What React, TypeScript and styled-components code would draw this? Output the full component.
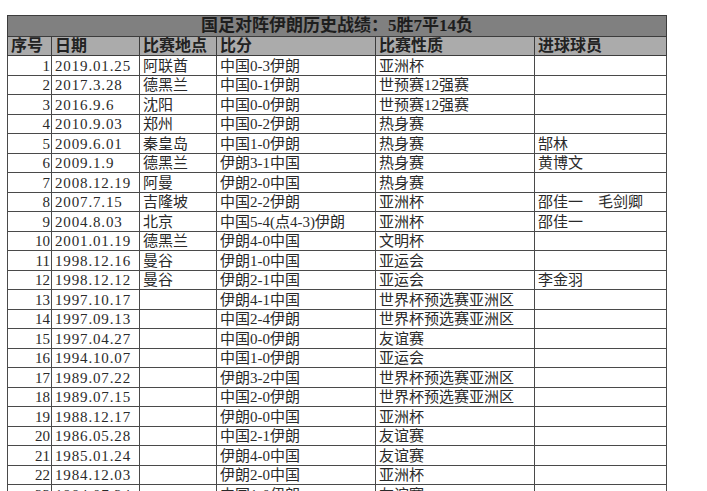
import React from "react";
import styled, { createGlobalStyle } from "styled-components";

const GlobalStyle = createGlobalStyle`
  html, body {
    margin: 0;
    padding: 0;
    background: #ffffff;
  }
  body {
    font-family: "Liberation Serif", "Noto Sans CJK SC", serif;
    color: #222222;
  }
`;

const COLUMNS = [44, 88, 77, 159, 159, 132];

const HEADERS = ["序号", "日期", "比赛地点", "比分", "比赛性质", "进球球员"];

const MATCHES = [
  ["2019.01.25", "阿联酋", "中国0-3伊朗", "亚洲杯", ""],
  ["2017.3.28", "德黑兰", "中国0-1伊朗", "世预赛12强赛", ""],
  ["2016.9.6", "沈阳", "中国0-0伊朗", "世预赛12强赛", ""],
  ["2010.9.03", "郑州", "中国0-2伊朗", "热身赛", ""],
  ["2009.6.01", "秦皇岛", "中国1-0伊朗", "热身赛", "郜林"],
  ["2009.1.9", "德黑兰", "伊朗3-1中国", "热身赛", "黄博文"],
  ["2008.12.19", "阿曼", "伊朗2-0中国", "热身赛", ""],
  ["2007.7.15", "吉隆坡", "中国2-2伊朗", "亚洲杯", "邵佳一　毛剑卿"],
  ["2004.8.03", "北京", "中国5-4(点4-3)伊朗", "亚洲杯", "邵佳一"],
  ["2001.01.19", "德黑兰", "伊朗4-0中国", "文明杯", ""],
  ["1998.12.16", "曼谷", "伊朗1-0中国", "亚运会", ""],
  ["1998.12.12", "曼谷", "伊朗2-1中国", "亚运会", "李金羽"],
  ["1997.10.17", "", "伊朗4-1中国", "世界杯预选赛亚洲区", ""],
  ["1997.09.13", "", "中国2-4伊朗", "世界杯预选赛亚洲区", ""],
  ["1997.04.27", "", "中国0-0伊朗", "友谊赛", ""],
  ["1994.10.07", "", "中国1-0伊朗", "亚运会", ""],
  ["1989.07.22", "", "伊朗3-2中国", "世界杯预选赛亚洲区", ""],
  ["1989.07.15", "", "中国2-0伊朗", "世界杯预选赛亚洲区", ""],
  ["1988.12.17", "", "伊朗0-0中国", "亚洲杯", ""],
  ["1986.05.28", "", "中国2-1伊朗", "友谊赛", ""],
  ["1985.01.24", "", "伊朗4-0中国", "友谊赛", ""],
  ["1984.12.03", "", "伊朗2-0中国", "亚洲杯", ""],
  ["1984.07.24", "", "中国1-0伊朗", "友谊赛", ""]
];

const Page = styled.div`
  padding: 15px 0 0 7px;
`;

const Sheet = styled.table`
  border-collapse: collapse;
  table-layout: fixed;
  width: 659px;
  border: 1px solid #3c3c3c;
`;

const TitleCell = styled.th`
  height: 20px;
  padding: 0;
  background: #808080;
  border: 1px solid #3c3c3c;
  font-size: 17px;
  font-weight: bold;
  line-height: 20px;
  text-align: center;
  color: #1e1e1e;
  white-space: nowrap;
`;

const HeadCell = styled.th`
  height: 18px;
  padding: 0 0 0 3px;
  background: #ababab;
  border: 1px solid #3c3c3c;
  font-size: 16px;
  font-weight: bold;
  line-height: 18px;
  text-align: left;
  color: #222222;
  white-space: nowrap;
  overflow: hidden;
`;

const Row = styled.tr`
  height: 19.5px;
`;

const Cell = styled.td<{ $align?: "left" | "right"; $date?: boolean }>`
  padding: ${props => (props.$align === "right" ? "0 1px 0 0" : "0 0 0 3px")};
  border: 1px solid #4a4a4a;
  font-size: 15px;
  line-height: 18px;
  text-align: ${props => props.$align || "left"};
  letter-spacing: ${props => (props.$date ? "0.85px" : "0")};
  color: #2a2a2a;
  white-space: nowrap;
  overflow: hidden;
  vertical-align: bottom;
`;

const App = () => (
  <Page>
    <GlobalStyle />
    <Sheet>
      <colgroup>
        {COLUMNS.map((width, i) => (
          <col key={i} style={{ width }} />
        ))}
      </colgroup>
      <thead>
        <tr>
          <TitleCell colSpan={6}>国足对阵伊朗历史战绩：5胜7平14负</TitleCell>
        </tr>
        <tr>
          {HEADERS.map(h => (
            <HeadCell key={h}>{h}</HeadCell>
          ))}
        </tr>
      </thead>
      <tbody>
        {MATCHES.map((m, i) => (
          <Row key={i}>
            <Cell $align="right">{i + 1}</Cell>
            <Cell $date>{m[0]}</Cell>
            <Cell>{m[1]}</Cell>
            <Cell>{m[2]}</Cell>
            <Cell>{m[3]}</Cell>
            <Cell>{m[4]}</Cell>
          </Row>
        ))}
      </tbody>
    </Sheet>
  </Page>
);

export default App;
